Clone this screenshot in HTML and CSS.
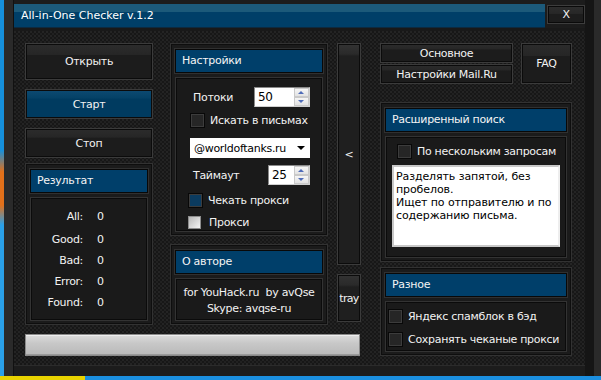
FILE: index.html
```html
<!DOCTYPE html>
<html lang="ru">

<head>
    <meta charset="UTF-8">
    <meta name="viewport" content="width=device-width, initial-scale=1.0">
    <title>All-in-One Checker v.1.2</title>
    <link rel="stylesheet" href="styles.css">
</head>

<body>
    <div class="window">
        <div class="titlebar">
            <div class="title">All-in-One Checker v.1.2</div>
            <button class="close-btn">X</button>
        </div>

        <div class="content">
            <div class="left-part">
                <div class="top-row">
                    <!-- кнопки и результат -->
                    <div class="col col-main">
                        <button class="btn btn-open">Открыть</button>
                        <button class="btn btn-blue btn-start">Старт</button>
                        <button class="btn btn-stop">Стоп</button>
                        <div class="group group-result">
                            <div class="group-head">Результат</div>
                            <div class="group-body stats">
                                <span class="stat-label">All:</span><span>0</span>
                                <span class="stat-label">Good:</span><span>0</span>
                                <span class="stat-label">Bad:</span><span>0</span>
                                <span class="stat-label">Error:</span><span>0</span>
                                <span class="stat-label">Found:</span><span>0</span>
                            </div>
                        </div>
                    </div>

                    <!-- настройки и автор -->
                    <div class="col col-settings">
                        <div class="group group-settings">
                            <div class="group-head">Настройки</div>
                            <div class="group-body settings-body">
                                <div class="field-row">
                                    <span>Потоки</span>
                                    <div class="spinner spinner-threads">
                                        <span>50</span>
                                        <div class="spin-btns"><span class="spin-up"></span><span class="spin-down"></span></div>
                                    </div>
                                </div>
                                <label class="check check-mail"><span class="cb"></span>Искать в письмах</label>
                                <div class="select">
                                    <span>@worldoftanks.ru</span>
                                    <span class="select-arrow"></span>
                                </div>
                                <div class="field-row row-timeout">
                                    <span>Таймаут</span>
                                    <div class="spinner spinner-timeout">
                                        <span>25</span>
                                        <div class="spin-btns"><span class="spin-up"></span><span class="spin-down"></span></div>
                                    </div>
                                </div>
                                <label class="check check-proxy"><span class="cb cb-blue"></span>Чекать прокси</label>
                                <label class="check check-plain"><span class="cb cb-light"></span>Прокси</label>
                            </div>
                        </div>
                        <div class="group group-about">
                            <div class="group-head">О авторе</div>
                            <div class="group-body about-body">
                                <div>for YouHack.ru&nbsp; by avQse</div>
                                <div>Skype: avqse-ru</div>
                            </div>
                        </div>
                    </div>

                    <!-- свернутая панель -->
                    <div class="col col-side">
                        <button class="btn btn-side">&lt;</button>
                        <button class="btn btn-tray">tray</button>
                    </div>
                </div>
                <div class="progress"></div>
            </div>

            <div class="col col-right">
                <div class="tabs-row">
                    <div class="tabs">
                        <button class="btn btn-tab">Основное</button>
                        <button class="btn btn-tab">Настройки Mail.Ru</button>
                    </div>
                    <button class="btn btn-faq">FAQ</button>
                </div>
                <div class="group group-search">
                    <div class="group-head">Расширенный поиск</div>
                    <div class="group-body search-body">
                        <label class="check check-multi"><span class="cb"></span>По нескольким запросам</label>
                        <div class="memo">Разделять запятой, без<br>пробелов.<br>Ищет по отправителю и по<br>содержанию письма.</div>
                    </div>
                </div>
                <div class="group group-misc">
                    <div class="group-head">Разное</div>
                    <div class="group-body misc-body">
                        <label class="check"><span class="cb"></span>Яндекс спамблок в бэд</label>
                        <label class="check"><span class="cb"></span>Сохранять чеканые прокси</label>
                    </div>
                </div>
            </div>
        </div>
    </div>
</body>
</html>
```

FILE: styles.css
```css
* {
    box-sizing: border-box;
}

body {
    margin: 0;
    width: 601px;
    height: 380px;
    overflow: hidden;
    font-family: "DejaVu Sans", sans-serif;
    font-size: 11px;
    letter-spacing: -0.3px;
    color: #f2f2f2;
    white-space: nowrap;
    background:
        linear-gradient(to right, #e9d300 0 85px, #1b8fe0 85px) left bottom / 100% 4px no-repeat,
        linear-gradient(to bottom, #1690dc 0 150px, #e2701a 172px 205px, #2aa0e8 225px);
}

button {
    font-family: inherit;
    font-size: inherit;
    letter-spacing: inherit;
    color: inherit;
    padding: 0;
    cursor: pointer;
}

.window {
    margin-left: 4px;
    width: 597px;
    height: 376px;
    display: flex;
    flex-direction: column;
    padding: 4px 16px 10px 10px;
    background:
        linear-gradient(to left, #2a2a2a 0 7px, #151515 7px 16px, transparent 16px),
        linear-gradient(to right, #2a2a2a 0 9px, #111 9px 10px, transparent 10px),
        #1c1c1c;
}

/* заголовок окна */
.titlebar {
    display: flex;
    height: 24px;
    gap: 2px;
}

.title {
    flex: 1;
    padding-left: 7px;
    line-height: 23px;
    letter-spacing: 0;
    background: linear-gradient(#1c5a7a 0 8px, #003f68 8px);
    border-bottom: 1px solid #0d2a40;
    color: #fff;
}

.close-btn {
    width: 38px;
    height: 19px;
    margin-top: 1px;
    border: 1px solid #3d3d3d;
    box-shadow: inset 0 0 0 1px #0a0a0a;
    background: linear-gradient(#2e2e2e, #272727 45%, #1d1d1d 46%);
}

/* рабочая область */
.content {
    flex: 1;
    display: flex;
    gap: 19px;
    padding: 12px 13px 0 11px;
    border-top: 3px solid #191919;
    border-bottom: 1px solid #2b2b2b;
    background-color: #171717;
    background-image:
        radial-gradient(circle at 1px 1px, #242424 0.9px, transparent 1.1px),
        radial-gradient(circle at 3px 3px, #212121 0.9px, transparent 1.1px);
    background-size: 4px 4px;
}

.left-part {
    width: 336px;
    display: flex;
    flex-direction: column;
}

.top-row {
    display: flex;
}

.col {
    display: flex;
    flex-direction: column;
}

.col-main {
    width: 128px;
    margin-right: 17px;
}

.col-settings {
    width: 158px;
    margin-right: 9px;
    gap: 8px;
}

.col-side {
    width: 24px;
    gap: 9px;
}

.col-right {
    width: 192px;
}

/* кнопки */
.btn {
    border: 1px solid #3b3b3b;
    box-shadow: inset 0 0 0 1px #0b0b0b;
    background: linear-gradient(#2c2c2c, #262626 30%, #1c1c1c 31%);
    color: #f2f2f2;
}

.btn-blue {
    background: linear-gradient(#0d4a72, #044166 30%, #003b60 31%);
}

.btn-open {
    height: 37px;
}

.btn-start {
    height: 30px;
    margin-top: 9px;
}

.btn-stop {
    height: 30px;
    margin-top: 9px;
}

.btn-side {
    height: 222px;
    background: linear-gradient(#333, #2a2a2a 10px, #1f1f1f 12px);
}

.btn-tray {
    height: 48px;
    letter-spacing: -0.7px;
    background: linear-gradient(#333, #2a2a2a 10px, #1f1f1f 12px);
}

/* групповые панели */
.group {
    display: flex;
    flex-direction: column;
    gap: 4px;
    padding: 5px 4px 3px;
    border: 1px solid #323232;
    box-shadow: inset 0 0 0 1px #0e0e0e;
    background: #1b1b1b;
}

.group-head {
    height: 24px;
    padding-left: 6px;
    line-height: 22px;
    background: #003f6a;
    border: 1px solid #080808;
    box-shadow: 0 0 0 1px #303030;
    color: #f4f4f4;
}

.group-body {
    flex: 1;
    border: 1px solid #333;
    box-shadow: inset 0 0 0 1px #0b0b0b;
    background: #1a1a1a;
}

.group-result {
    height: 162px;
    margin-top: 5px;
}

.stats {
    display: grid;
    grid-template-columns: 52px 1fr;
    grid-template-rows: 25px repeat(4, 21px);
    align-items: center;
    column-gap: 14px;
    padding-top: 6px;
}

.stat-label {
    text-align: right;
}

.group-settings {
    height: 193px;
}

.group-about {
    height: 81px;
}

.settings-body {
    display: flex;
    flex-direction: column;
    padding: 9px 12px 0 14px;
}

.field-row {
    display: flex;
    justify-content: space-between;
    align-items: center;
    height: 20px;
    padding-left: 3px;
}

.row-timeout {
    margin-top: 7px;
}

.spinner {
    height: 20px;
    display: flex;
    align-items: center;
    justify-content: space-between;
    padding-left: 3px;
    background: #fff;
    border: 1px solid #8a8a8a;
    border-right-color: #d0d0d0;
    border-bottom-color: #d0d0d0;
    color: #000;
    font-size: 12px;
}

.spinner-threads {
    width: 56px;
}

.spinner-timeout {
    width: 42px;
}

.spin-btns {
    width: 15px;
    height: 18px;
    display: flex;
    flex-direction: column;
}

.spin-btns span {
    flex: 1;
    position: relative;
    border: 1px solid #c9c9c9;
    background: linear-gradient(#f6f6f6, #e2e2e2);
}

.spin-btns span::after {
    content: "";
    position: absolute;
    left: 3px;
    top: 2px;
    border-left: 3px solid transparent;
    border-right: 3px solid transparent;
}

.spin-up::after {
    border-bottom: 3px solid #4f6cb8;
}

.spin-down::after {
    border-top: 3px solid #4f6cb8;
}

/* флажки */
.check {
    display: flex;
    align-items: center;
    gap: 5px;
    height: 16px;
}

.cb {
    width: 15px;
    height: 15px;
    flex: none;
    border: 1px solid #080808;
    box-shadow: inset 0 0 0 1px #3c3c3c;
    background: #262626;
}

.cb-blue {
    background: #0b3b5f;
}

.cb-light {
    width: 13px;
    height: 13px;
    margin: 0 1px 0 0;
    border: 1px solid #8d8d8d;
    box-shadow: none;
    background: linear-gradient(135deg, #b8b8b8, #f4f4f4);
}

.check-mail {
    margin-top: 5px;
}

.check-proxy {
    margin-top: 7px;
    margin-left: -2px;
}

.check-plain {
    margin-top: 6px;
    margin-left: -2px;
    gap: 7px;
}

.select {
    height: 20px;
    margin-top: 10px;
    display: flex;
    align-items: center;
    justify-content: space-between;
    padding: 0 5px 0 4px;
    background: #fff;
    color: #000;
}

.select-arrow {
    border-left: 4px solid transparent;
    border-right: 4px solid transparent;
    border-top: 4px solid #000;
}

.about-body {
    padding-top: 6px;
    text-align: center;
    line-height: 16px;
}

/* прогресс */
.progress {
    width: 335px;
    height: 22px;
    margin-top: 9px;
    border: 1px solid #8a8a8a;
    box-shadow: inset 0 1px 0 #eee, inset 0 -1px 0 #9a9a9a;
    background: linear-gradient(#dcdcdc, #c8c8c8 40%, #b9b9b9);
}

/* правая колонка */
.tabs-row {
    display: flex;
    gap: 8px;
    height: 41px;
}

.tabs {
    flex: 1;
    display: flex;
    flex-direction: column;
    gap: 1px;
}

.btn-tab {
    flex: 1;
}

.btn-faq {
    width: 51px;
}

.group-search {
    height: 160px;
    margin-top: 18px;
}

.search-body {
    padding: 6px 6px 0 6px;
}

.check-multi {
    margin-left: 5px;
    gap: 5px;
}

.memo {
    height: 82px;
    margin-top: 6px;
    padding: 3px 2px;
    background: #fff;
    border: 2px solid #c8c8c8;
    border-right-color: #eee;
    color: #000;
    line-height: 13px;
    letter-spacing: -0.1px;
}

.group-misc {
    height: 89px;
    margin-top: 5px;
}

.misc-body {
    display: flex;
    flex-direction: column;
    gap: 7px;
    padding: 6px 0 0 2px;
}
```
